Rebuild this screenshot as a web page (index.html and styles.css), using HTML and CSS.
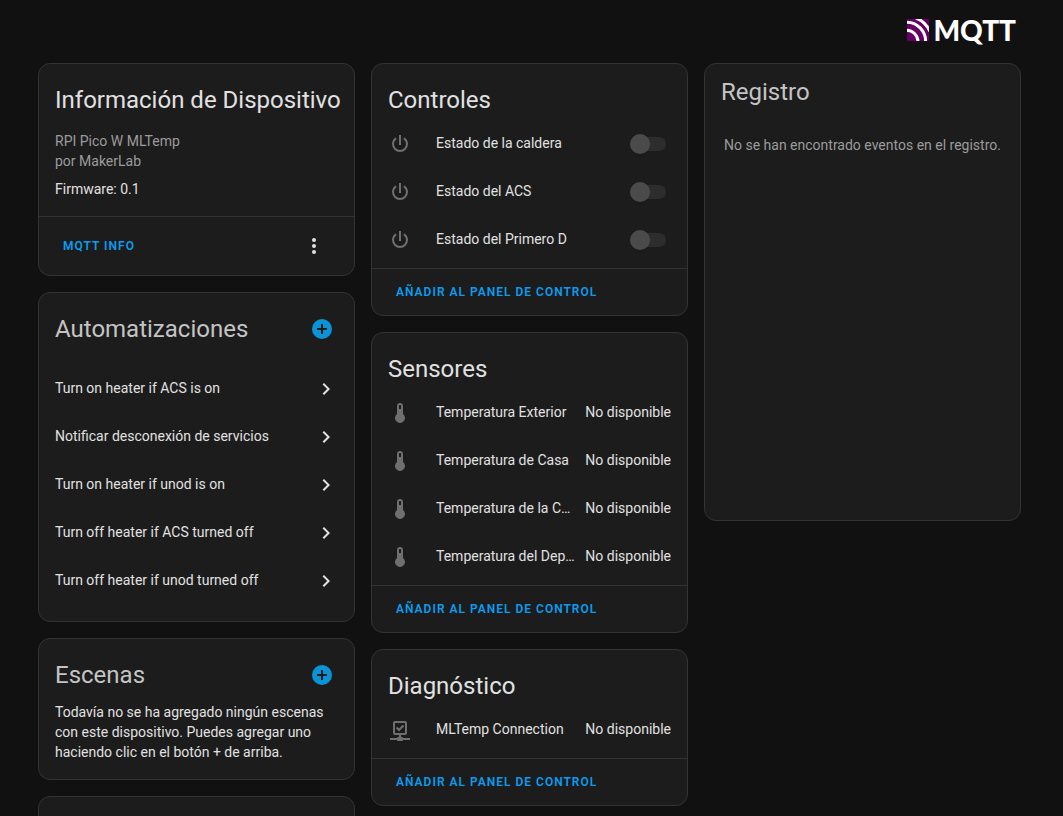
FILE: index.html
```html
<!DOCTYPE html>
<html lang="es">
<head>
<meta charset="utf-8">
<meta name="viewport" content="width=device-width, initial-scale=1">
<title>Dispositivo MQTT</title>
<link rel="stylesheet" href="styles.css">
</head>
<body>
<svg class="sprite" aria-hidden="true">
  <symbol id="power" viewBox="0 0 24 24"><path d="M16.56,5.44L15.11,6.89C16.84,7.94 18,9.83 18,12A6,6 0 0,1 12,18A6,6 0 0,1 6,12C6,9.83 7.16,7.94 8.88,6.88L7.44,5.44C5.36,6.88 4,9.28 4,12A8,8 0 0,0 12,20A8,8 0 0,0 20,12C20,9.28 18.64,6.88 16.56,5.44M13,3H11V13H13"/></symbol>
  <symbol id="thermometer" viewBox="0 0 24 24"><path d="M15 13V5A3 3 0 0 0 9 5V13A5 5 0 1 0 15 13M12 4A1 1 0 0 1 13 5V8H11V5A1 1 0 0 1 12 4Z"/></symbol>
  <symbol id="network" viewBox="0 0 24 24"><path d="M15,20A1,1 0 0,0 14,19H13V17H17A2,2 0 0,0 19,15V5A2,2 0 0,0 17,3H7A2,2 0 0,0 5,5V15A2,2 0 0,0 7,17H11V19H10A1,1 0 0,0 9,20H2V22H9A1,1 0 0,0 10,23H14A1,1 0 0,0 15,22H22V20H15M7,15V5H17V15H7M11,13.4L7.8,10.2L9.2,8.8L11,10.6L14.8,6.8L16.2,8.2"/></symbol>
  <symbol id="dots" viewBox="0 0 24 24"><circle cx="12" cy="6" r="2"/><circle cx="12" cy="12" r="2"/><circle cx="12" cy="18" r="2"/></symbol>
  <symbol id="plus" viewBox="0 0 24 24"><path d="M17,13H13V17H11V13H7V11H11V7H13V11H17M12,2A10,10 0 0,0 2,12A10,10 0 0,0 12,22A10,10 0 0,0 22,12A10,10 0 0,0 12,2Z"/></symbol>
  <symbol id="chevron" viewBox="0 0 24 24"><path d="M8.59,16.58L13.17,12L8.59,7.41L10,6L16,12L10,18L8.59,16.58Z"/></symbol>
</svg>

<header class="top">
  <div class="logo">
    <svg class="logo-mark" viewBox="0 0 22 22" aria-hidden="true">
      <rect width="22" height="22" rx="1" fill="#660066"/>
      <g fill="none" stroke="#fff" stroke-width="3">
        <path d="M-1 11.2A11.6 11.6 0 0 1 11 23"/>
        <path d="M-1 3.2A19 19 0 0 1 18.6 23"/>
        <path d="M9 -1A25 25 0 0 1 23 12.5"/>
      </g>
    </svg>
    <span class="logo-text">MQTT</span>
  </div>
</header>

<main class="columns">
  <div class="column">
    <section class="card">
      <h1 class="title">Información de Dispositivo</h1>
      <div class="info">
        <p class="muted">RPI Pico W MLTemp</p>
        <p class="muted">por MakerLab</p>
        <p class="firmware">Firmware: 0.1</p>
      </div>
      <footer class="actions">
        <button class="text-button" type="button">MQTT INFO</button>
        <button class="icon-button menu" type="button" aria-label="Más opciones"><svg class="icon"><use href="#dots"/></svg></button>
      </footer>
    </section>

    <section class="card">
      <div class="title-row">
        <h1 class="title soft">Automatizaciones</h1>
        <button class="icon-button add" type="button" aria-label="Añadir automatización"><svg class="icon"><use href="#plus"/></svg></button>
      </div>
      <nav class="links">
        <a class="link" href="#a1"><span class="link-text">Turn on heater if ACS is on</span><svg class="icon"><use href="#chevron"/></svg></a>
        <a class="link" href="#a2"><span class="link-text">Notificar desconexión de servicios</span><svg class="icon"><use href="#chevron"/></svg></a>
        <a class="link" href="#a3"><span class="link-text">Turn on heater if unod is on</span><svg class="icon"><use href="#chevron"/></svg></a>
        <a class="link" href="#a4"><span class="link-text">Turn off heater if ACS turned off</span><svg class="icon"><use href="#chevron"/></svg></a>
        <a class="link" href="#a5"><span class="link-text">Turn off heater if unod turned off</span><svg class="icon"><use href="#chevron"/></svg></a>
      </nav>
    </section>

    <section class="card">
      <div class="title-row">
        <h1 class="title soft">Escenas</h1>
        <button class="icon-button add" type="button" aria-label="Añadir escena"><svg class="icon"><use href="#plus"/></svg></button>
      </div>
      <p class="note">Todavía no se ha agregado ningún escenas con este dispositivo. Puedes agregar uno haciendo clic en el botón + de arriba.</p>
    </section>

    <section class="card next"></section>
  </div>

  <div class="column">
    <section class="card">
      <h1 class="title">Controles</h1>
      <div class="rows">
        <div class="row"><svg class="icon state"><use href="#power"/></svg><label class="name" for="caldera">Estado de la caldera</label><input class="switch" id="caldera" type="checkbox" role="switch" disabled></div>
        <div class="row"><svg class="icon state"><use href="#power"/></svg><label class="name" for="acs">Estado del ACS</label><input class="switch" id="acs" type="checkbox" role="switch" disabled></div>
        <div class="row"><svg class="icon state"><use href="#power"/></svg><label class="name" for="primero">Estado del Primero D</label><input class="switch" id="primero" type="checkbox" role="switch" disabled></div>
      </div>
      <footer class="actions"><button class="text-button" type="button">AÑADIR AL PANEL DE CONTROL</button></footer>
    </section>

    <section class="card">
      <h1 class="title">Sensores</h1>
      <div class="rows">
        <div class="row"><svg class="icon state"><use href="#thermometer"/></svg><span class="name">Temperatura Exterior</span><span class="value">No disponible</span></div>
        <div class="row"><svg class="icon state"><use href="#thermometer"/></svg><span class="name">Temperatura de Casa</span><span class="value">No disponible</span></div>
        <div class="row"><svg class="icon state"><use href="#thermometer"/></svg><span class="name">Temperatura de la C…</span><span class="value">No disponible</span></div>
        <div class="row"><svg class="icon state"><use href="#thermometer"/></svg><span class="name">Temperatura del Dep…</span><span class="value">No disponible</span></div>
      </div>
      <footer class="actions"><button class="text-button" type="button">AÑADIR AL PANEL DE CONTROL</button></footer>
    </section>

    <section class="card">
      <h1 class="title">Diagnóstico</h1>
      <div class="rows">
        <div class="row"><svg class="icon state"><use href="#network"/></svg><span class="name">MLTemp Connection</span><span class="value">No disponible</span></div>
      </div>
      <footer class="actions"><button class="text-button" type="button">AÑADIR AL PANEL DE CONTROL</button></footer>
    </section>
  </div>

  <div class="column">
    <section class="card log">
      <h1 class="title soft">Registro</h1>
      <p class="log-body">No se han encontrado eventos en el registro.</p>
    </section>
  </div>
</main>
</body>
</html>
```
FILE: styles.css
```css
* {
  box-sizing: border-box;
}

body {
  display: flex;
  flex-direction: column;
  height: 100vh;
  margin: 0;
  overflow: hidden;
  background: #111;
  color: #e1e1e1;
  font: 14px/20px Roboto, "Noto Sans", sans-serif;
}

h1,
p {
  margin: 0;
}

.sprite {
  position: absolute;
  width: 0;
  height: 0;
}

.icon {
  flex: none;
  display: block;
  width: 24px;
  height: 24px;
  fill: currentColor;
}

.top {
  display: flex;
  justify-content: flex-end;
  padding: 12px 47px 15px 38px;
}

.logo {
  display: flex;
  align-items: center;
  gap: 4px;
}

.logo-mark {
  width: 22px;
  height: 22px;
}

.logo-text {
  color: #fff;
  font: 900 28px/36px Lato, "Open Sans", sans-serif;
}

.columns {
  flex: 1;
  display: grid;
  grid-template-columns: repeat(3, minmax(0, 1fr));
  gap: 16px;
  min-height: 0;
  padding: 0 42px 0 38px;
}

.column {
  display: flex;
  flex-direction: column;
  gap: 16px;
}

.card {
  flex: none;
  border: 1px solid #333;
  border-radius: 12px;
  background: #1c1c1c;
}

.title {
  padding: 12px 16px 0;
  font-size: 24px;
  font-weight: 400;
  line-height: 48px;
  white-space: nowrap;
}

.soft {
  color: #c4c4c4;
}

.title-row {
  display: flex;
  justify-content: space-between;
  padding-right: 12px;
}

.info {
  padding: 7px 16px 17px;
}

.muted {
  color: #9b9b9b;
}

.firmware {
  margin-top: 8px;
}

.actions {
  display: flex;
  align-items: center;
  justify-content: space-between;
  padding: 5px 16px;
  border-top: 1px solid #333;
}

.text-button {
  height: 36px;
  padding: 0 8px;
  border: 0;
  background: none;
  color: #0a9cf0;
  font: 600 12px/36px Roboto, "Noto Sans", sans-serif;
  letter-spacing: 1px;
}

.icon-button {
  display: flex;
  align-items: center;
  justify-content: center;
  width: 40px;
  height: 48px;
  padding: 0;
  border: 0;
  background: none;
}

.menu {
  width: 48px;
  color: #e1e1e1;
}

.add {
  margin-top: 12px;
  color: #0a94d8;
}

.links {
  padding: 12px 16px 16px;
}

.link {
  display: flex;
  align-items: center;
  justify-content: space-between;
  height: 48px;
  color: inherit;
  text-decoration: none;
}

.link-text,
.name,
.value {
  padding-bottom: 2px;
}

.note {
  padding: 3px 16px 17px;
}

.next {
  height: 140px;
}

.rows {
  display: flex;
  flex-direction: column;
  gap: 8px;
  padding: 0 16px 8px;
}

.row {
  display: flex;
  align-items: center;
  height: 40px;
}

.state {
  margin-right: 24px;
  color: #6f6f6f;
}

.name {
  flex: 1;
  min-width: 0;
  overflow: hidden;
  text-overflow: ellipsis;
  white-space: nowrap;
}

.value {
  margin-left: 8px;
  white-space: nowrap;
}

.switch {
  appearance: none;
  display: flex;
  align-items: center;
  width: 36px;
  height: 14px;
  margin: 0 5px 0 0;
  border-radius: 7px;
  background: #2d2d2d;
}

.switch::before {
  content: "";
  flex: none;
  width: 20px;
  height: 20px;
  border-radius: 50%;
  background: #4b4b4b;
}

.log .title {
  padding: 4px 16px;
}

.log-body {
  height: 400px;
  padding: 15px 16px;
  color: #9b9b9b;
  text-align: center;
}
```
